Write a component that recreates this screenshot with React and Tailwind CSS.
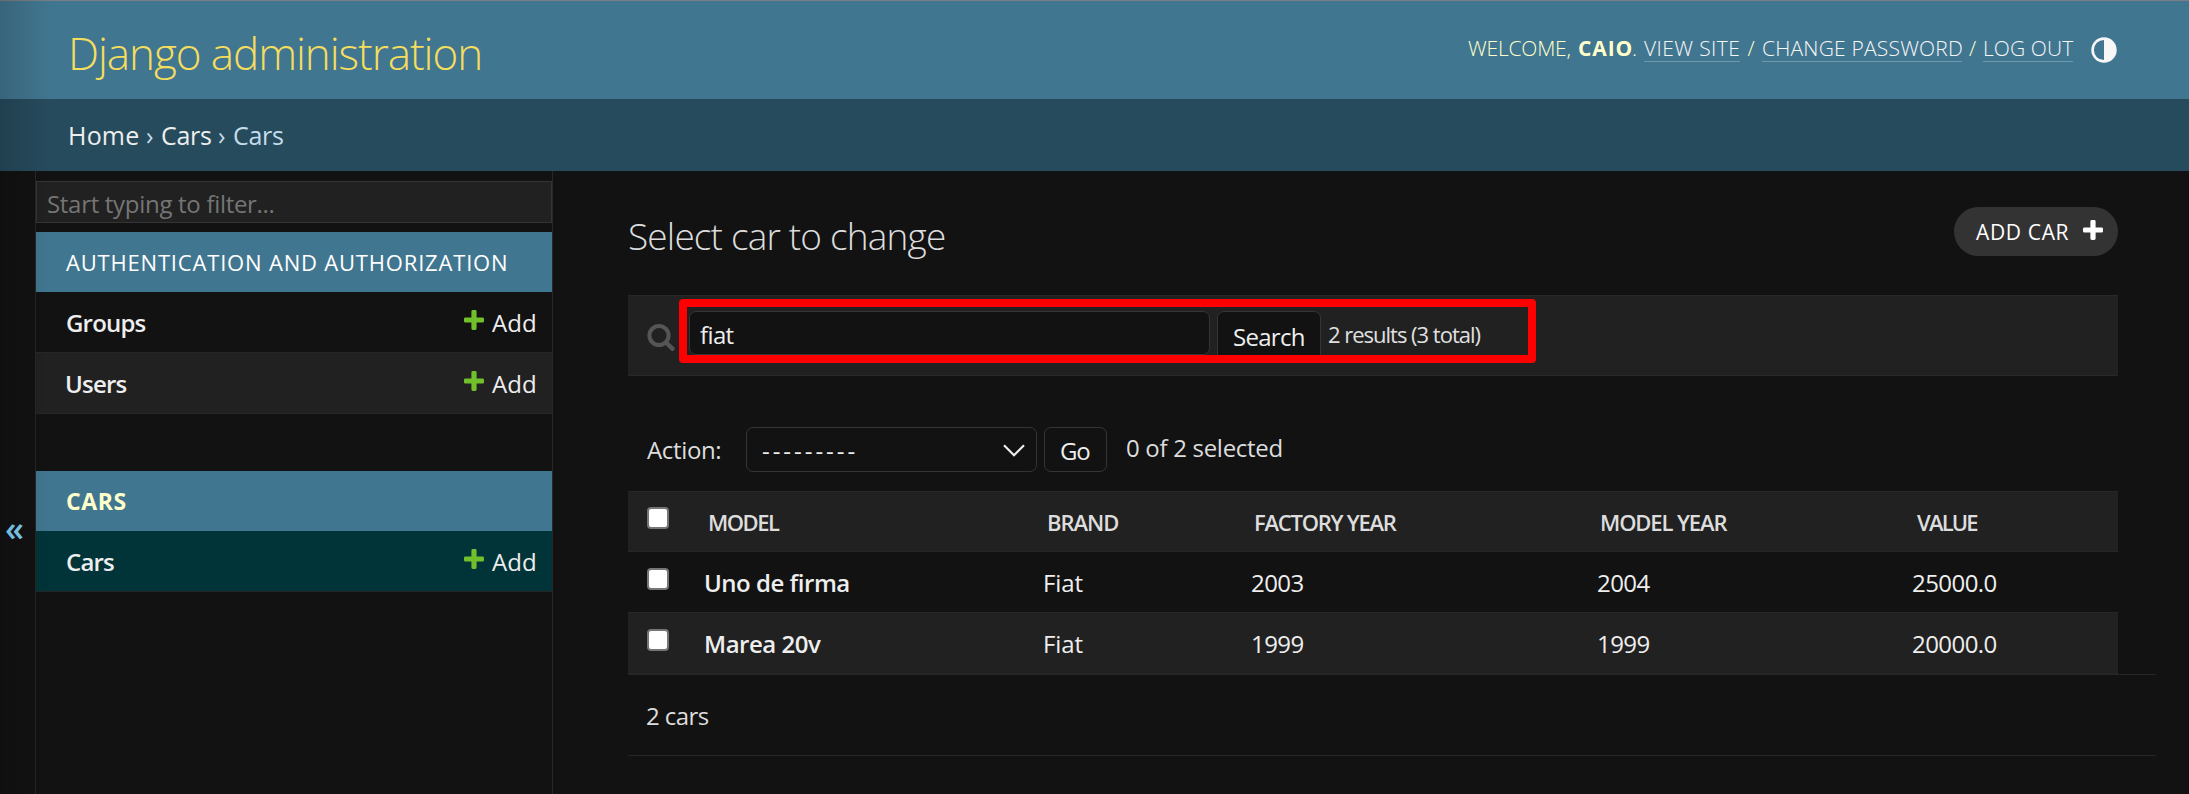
import React from "react";

function Plus({ className }) {
  return (
    <svg viewBox="0 0 20 20" className={className} fill="currentColor">
      <path d="M8.8 0h2.4a1.4 1.4 0 0 1 1.4 1.4v6h6A1.4 1.4 0 0 1 20 8.8v2.4a1.4 1.4 0 0 1-1.4 1.4h-6v6a1.4 1.4 0 0 1-1.4 1.4H8.8a1.4 1.4 0 0 1-1.4-1.4v-6h-6A1.4 1.4 0 0 1 0 11.2V8.8a1.4 1.4 0 0 1 1.4-1.4h6v-6A1.4 1.4 0 0 1 8.8 0z" />
    </svg>
  );
}

function AddLink() {
  return (
    <a className="flex items-center text-2xl text-[#eeeeee] tracking-[0.1px]">
      <Plus className="mr-[8px] mb-[5px] size-5 text-[#70bf2b]" />
      <span className="w-[60px] pt-px">Add</span>
    </a>
  );
}

function Checkbox() {
  return <span className="block size-[22px] rounded-[4px] border-2 border-[#767676] bg-white" />;
}

function Header() {
  return (
    <header className="flex h-[99px] shrink-0 border-t border-[#7b7d86] bg-[#417690] pl-[68px]">
      <h1 className="w-[1400px] pt-[20px] text-[44px] leading-[64px] font-light tracking-[-1.08px] text-[#f5dd5d]">
        Django administration
      </h1>
      <div className="flex pt-[33px] text-[21px] leading-[29px] font-light whitespace-nowrap text-[#ffffcc]">
        <span className="w-[110px] tracking-[-0.2px]">WELCOME,</span>
        <strong className="w-[54px] font-bold tracking-[0.89px]">CAIO</strong>
        <span className="w-[12px]">.</span>
        <a className="h-[28px] w-[96px] border-b border-[#7098ab] tracking-[0.4px] text-[#f7f7f7]">VIEW SITE</a>
        <span className="w-[22px] text-center">/</span>
        <a className="h-[28px] w-[200px] border-b border-[#7098ab] tracking-[0.2px] text-[#f7f7f7]">CHANGE PASSWORD</a>
        <span className="w-[21px] text-center">/</span>
        <a className="h-[28px] w-[90px] border-b border-[#7098ab] tracking-[0.1px] text-[#f7f7f7]">LOG OUT</a>
        <svg viewBox="0 0 26 26" className="mt-[3px] ml-[18px] size-[26px] text-[#f7f7f7]" fill="currentColor">
          <path fillRule="evenodd" d="M13 .3a12.7 12.7 0 1 1 0 25.4A12.7 12.7 0 0 1 13 .3zm0 2.6a10.1 10.1 0 0 0 0 20.2z" />
        </svg>
      </div>
    </header>
  );
}

function Breadcrumbs() {
  return (
    <nav className="flex h-[72px] shrink-0 bg-[#264b5d] pt-px pl-[68px] text-[25px] leading-[71px] whitespace-nowrap text-[#c4dce8]">
      <a className="w-[78px] tracking-[0.2px] text-[#eeeeee]">Home</a>
      <span className="w-[15px]">›</span>
      <a className="w-[57px] tracking-[-0.3px] text-[#eeeeee]">Cars</a>
      <span className="w-[15px]">›</span>
      <span className="tracking-[-0.3px]">Cars</span>
    </nav>
  );
}

function Sidebar() {
  return (
    <aside className="w-[518px] shrink-0 border-x border-[#272727] pt-[10px] whitespace-nowrap">
      <div className="h-[42px] border border-[#353535] bg-[#212121] pl-[10px] text-2xl leading-[43px] tracking-[-0.3px] text-[#757575]">
        Start typing to filter...
      </div>
      <section className="mt-[9px]">
        <h2 className="h-[60px] bg-[#417690] pl-[30px] text-[22px] leading-[60px] tracking-[0.81px] text-white">
          AUTHENTICATION AND AUTHORIZATION
        </h2>
        <div className="flex h-[61px] items-center justify-between border-b border-[#272727] pl-[30px]">
          <a className="pt-[2px] text-2xl font-semibold tracking-[-0.8px] text-[#eeeeee]">Groups</a>
          <AddLink />
        </div>
        <div className="flex h-[61px] items-center justify-between border-b border-[#272727] bg-[#212121] pl-[29px]">
          <a className="pt-[2px] text-2xl font-semibold tracking-[-0.8px] text-[#eeeeee]">Users</a>
          <AddLink />
        </div>
      </section>
      <section className="mt-[57px]">
        <h2 className="h-[60px] bg-[#417690] pl-[30px] text-[23px] leading-[60px] font-bold tracking-[0.6px] text-[#ffffcc]">
          CARS
        </h2>
        <div className="flex h-[61px] items-center justify-between border-b border-[#272727] bg-[#003438] pl-[30px]">
          <a className="pt-[2px] text-2xl font-semibold tracking-[-0.8px] text-[#eeeeee]">Cars</a>
          <AddLink />
        </div>
      </section>
    </aside>
  );
}

function SearchBar() {
  return (
    <div className="relative mt-[39px] flex h-[81px] w-[1490px] items-start border-y border-[#282828] bg-[#212121] whitespace-nowrap">
      <svg viewBox="0 0 28 28" className="mt-[27px] ml-[19px] size-7 text-[#555555]" fill="none" stroke="currentColor">
        <circle cx="12" cy="12.5" r="9.6" strokeWidth="4" />
        <path d="M19 19.5l6.4 6.2" strokeWidth="4.4" strokeLinecap="round" />
      </svg>
      <div className="mt-[15px] ml-[14px] h-[44px] w-[521px] rounded-[7px] border border-[#353535] bg-[#121212] pl-[10px] text-2xl leading-[46px] tracking-[-0.62px] text-[#eeeeee]">
        fiat
      </div>
      <button className="mt-[15px] ml-[7px] h-[50px] w-[104px] rounded-[7px] border border-[#353535] bg-[#121212] pt-px pl-[15px] text-left text-2xl leading-[48px] tracking-[-0.7px] text-[#eeeeee]">
        Search
      </button>
      <span className="ml-[7px] text-[22px] leading-[76px] tracking-[-1.01px] text-[#e0e0e0]">2 results (3 total)</span>
      <div className="absolute top-[3px] left-[51px] h-[64px] w-[857px] rounded-[4px] border-8 border-[#ff0000]" />
    </div>
  );
}

function Actions() {
  return (
    <div className="mt-[51px] flex h-[45px] text-2xl whitespace-nowrap text-[#dddddd]">
      <span className="w-[118px] pl-[19px] leading-[46px] tracking-[-0.35px]">Action:</span>
      <div className="flex w-[291px] justify-between rounded-[7px] border border-[#353535] pr-[11px] pl-[15px] leading-[45px] tracking-[2.96px] text-[#eeeeee]">
        ---------
        <svg viewBox="0 0 22 13" className="mt-[16px] h-[13px] w-[22px]" fill="none" stroke="currentColor" strokeWidth="2.2">
          <path d="M1 1.2l10 10 10-10" />
        </svg>
      </div>
      <button className="ml-[7px] w-[63px] rounded-[7px] border border-[#353535] pl-[15px] text-left leading-[45px] tracking-[-1.1px] text-[#eeeeee]">Go</button>
      <span className="ml-[19px] leading-[41px] tracking-[-0.3px]">0 of 2 selected</span>
    </div>
  );
}

const rows = [
  { model: "Uno de firma", brand: "Fiat", factory: "2003", year: "2004", value: "25000.0" },
  { model: "Marea 20v", brand: "Fiat", factory: "1999", year: "1999", value: "20000.0" },
];

function Results() {
  return (
    <div className="mt-[19px] whitespace-nowrap">
      <div className="grid h-[61px] w-[1490px] grid-cols-[80px_339px_208px_346px_316px_1fr] border-y border-[#272727] bg-[#212121] text-[22px] leading-[61px] font-semibold text-[#dddddd]">
        <div className="pt-[15px] pl-[19px]"><Checkbox /></div>
        <div className="tracking-[-1.5px]">MODEL</div>
        <div className="tracking-[-1px]">BRAND</div>
        <div className="-ml-px tracking-[-1.25px]">FACTORY YEAR</div>
        <div className="-ml-px tracking-[-1.12px]">MODEL YEAR</div>
        <div className="tracking-[-1.8px]">VALUE</div>
      </div>
      {rows.map((r, i) => (
        <div
          key={r.model}
          className={
            "grid h-[61px] w-[1490px] grid-cols-[76px_339px_208px_346px_315px_1fr] border-b border-[#272727] text-2xl leading-[62px] text-[#eeeeee] " +
            (i % 2 ? "bg-[#212121]" : "bg-[#121212]")
          }
        >
          <div className="pt-[16px] pl-[19px]"><Checkbox /></div>
          <div className="font-semibold tracking-[-0.48px]">{r.model}</div>
          <div className="tracking-[-0.1px]">{r.brand}</div>
          <div className="tracking-[-0.56px]">{r.factory}</div>
          <div className="tracking-[-0.56px]">{r.year}</div>
          <div className="tracking-[-0.55px]">{r.value}</div>
        </div>
      ))}
      <p className="h-[82px] w-[1528px] border-y border-[#272727] pl-[18px] text-2xl leading-[82px] tracking-[-0.58px] text-[#dddddd]">
        2 cars
      </p>
    </div>
  );
}

export default function App() {
  return (
    <div className="relative flex h-[794px] w-[2189px] flex-col overflow-hidden bg-[#121212] font-['Open_Sans',sans-serif]">
      <Header />
      <Breadcrumbs />
      <div className="flex min-h-0 flex-1">
        <div className="w-[35px] shrink-0 pt-[337px] pl-[5px] text-[34px] leading-[40px] font-semibold text-[#81d4fa]">«</div>
        <Sidebar />
        <main className="ml-[75px] flex-1">
          <div className="flex h-[85px] w-[1490px] justify-between pt-[36px]">
            <h2 className="text-[37px] leading-[57px] font-light tracking-[-0.83px] text-[#dddddd]">Select car to change</h2>
            <a className="flex h-[49px] w-[164px] rounded-full bg-[#333333] pl-[22px] text-[21px] leading-[50px] tracking-[0.65px] whitespace-nowrap text-white">
              <span className="w-[107px]">ADD CAR</span>
              <Plus className="mt-[13px] size-5" />
            </a>
          </div>
          <SearchBar />
          <Actions />
          <Results />
        </main>
      </div>
      <div className="pointer-events-none absolute inset-y-0 left-0 w-[50px] bg-linear-to-r from-black/15 to-transparent" />
    </div>
  );
}
